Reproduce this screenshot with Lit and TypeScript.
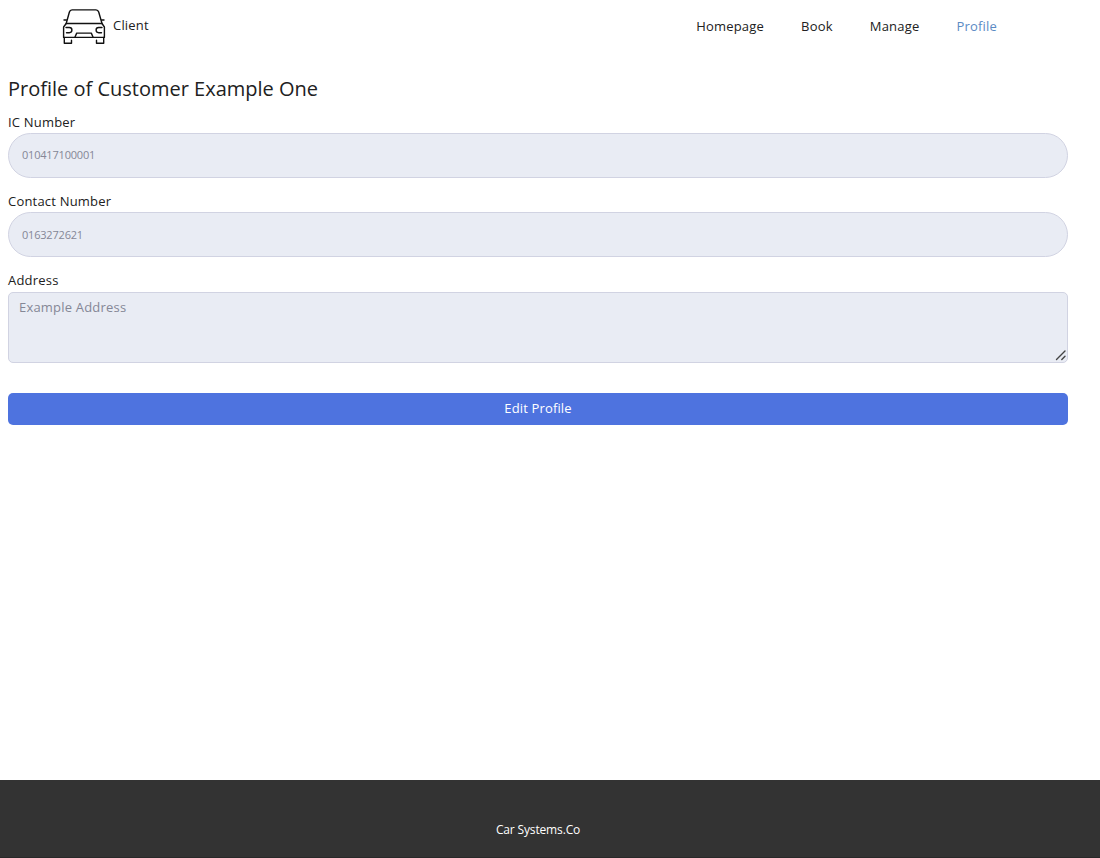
import { LitElement, html, css } from "lit";
import { customElement } from "lit/decorators.js";

@customElement("app-root")
export class AppRoot extends LitElement {
  static styles = css`
    :host {
      display: flex;
      flex-direction: column;
      height: 858px;
      background: #fff;
      color: #212121;
      font: 400 13px/20px "Open Sans", sans-serif;
      letter-spacing: 0.2px;
    }
    * { box-sizing: border-box; }
    header {
      display: flex;
      justify-content: space-between;
      height: 53px;
      padding: 0 103px 0 62px;
    }
    .brand { display: flex; align-items: flex-start; }
    .brand svg { margin-top: 8px; }
    .brand span { margin: 15px 0 0 7px; }
    nav { display: flex; gap: 37px; padding-top: 16px; }
    nav a { color: #212121; text-decoration: none; }
    nav a.active { color: #5b8bc4; }
    main { flex: 1; padding: 22px 32px 0 8px; }
    h1 { font-size: 20px; line-height: 28px; font-weight: 400; margin: 0 0 9px; letter-spacing: 0; }
    label { display: block; height: 21px; }
    input, textarea {
      display: block;
      width: 100%;
      border: 1px solid #d1d3e2;
      background: #e9ecf4;
      color: #858796;
      font-family: inherit;
      font-weight: 400;
      outline: none;
      margin: 0;
    }
    input { height: 45px; border-radius: 23px; padding: 0 13px; font-size: 11px; letter-spacing: -0.2px; margin-bottom: 13px; }
    #ic { padding-bottom: 2px; }
    .area { position: relative; margin-top: 1px; }
    textarea {
      height: 71px;
      border-radius: 5px;
      padding: 4px 10px;
      font-size: 13px;
      line-height: 20px;
      letter-spacing: 0.2px;
      resize: none;
    }
    .grip { position: absolute; right: 1px; bottom: 2px; }
    button {
      display: block;
      width: 100%;
      height: 32px;
      margin-top: 30px;
      padding: 0 0 2px;
      border: 0;
      border-radius: 5px;
      background: #4e73df;
      color: #fff;
      font: 400 13px/20px "Open Sans", sans-serif;
      letter-spacing: 0.15px;
    }
    footer {
      height: 78px;
      padding: 40px 24px 0 0;
      background: #333;
      border-bottom: 1px solid #292929;
      color: #fff;
      font-size: 12px;
      font-weight: 400;
      letter-spacing: -0.15px;
      text-align: center;
    }
  `;

  render() {
    return html`
      <header>
        <div class="brand">
          <svg width="44" height="37" viewBox="62 8 44 37" fill="none" stroke="#111" stroke-width="1.4" stroke-linejoin="round" stroke-linecap="round">
            <path d="M66.2 23.5 69.4 12Q70 9.9 72 9.9H96Q98 9.9 98.7 12L102 23.5" />
            <path d="M66.5 23.5H101.8M66.2 23.5 63.6 27V37.4H104.4V27L102 23.5" />
            <path d="M64 20H66.4M104 20H101.6" />
            <path d="M64.3 37.4V43.2H71.5V40.2M103.7 37.4V43.2H96.5V40.2" />
            <path d="M66 27.5H69.3A2.6 2.6 0 0 1 69.3 32.7H66.5M102 27.5H98.7A2.6 2.6 0 0 0 98.7 32.7H101.5" />
            <path d="M75 37 76.7 33.1H91.3L93 37" />
          </svg>
          <span>Client</span>
        </div>
        <nav>
          <a>Homepage</a><a>Book</a><a>Manage</a><a class="active">Profile</a>
        </nav>
      </header>
      <main>
        <h1>Profile of Customer Example One</h1>
        <label for="ic">IC Number</label>
        <input id="ic" readonly value="010417100001" />
        <label for="contact">Contact Number</label>
        <input id="contact" readonly value="0163272621" />
        <label for="address">Address</label>
        <div class="area">
          <textarea id="address" readonly .value=${"Example Address"}></textarea>
          <svg class="grip" width="12" height="12" viewBox="0 0 12 12" stroke="#444" stroke-width="1.4" stroke-linecap="round">
            <path d="M1.5 10.5 10 2M6.8 10.5 10 7.3" />
          </svg>
        </div>
        <button>Edit Profile</button>
      </main>
      <footer>Car Systems.Co</footer>
    `;
  }
}
